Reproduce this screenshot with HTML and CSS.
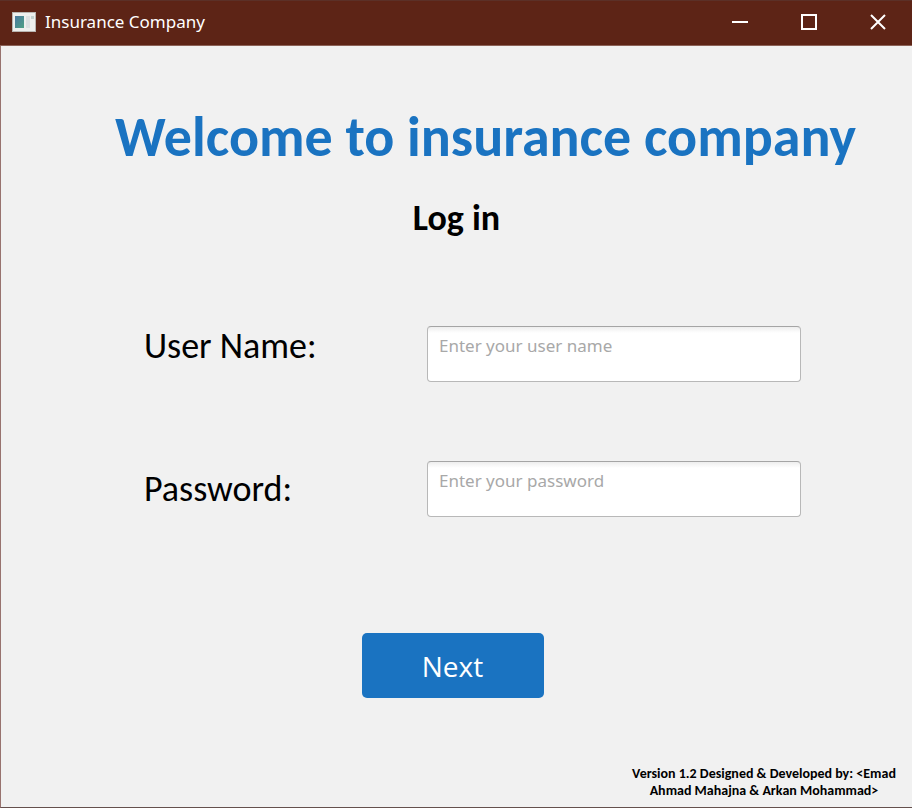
FILE: index.html
```html
<!DOCTYPE html>
<html lang="en">
<head>
<meta charset="utf-8">
<title>Insurance Company</title>
<link rel="stylesheet" href="styles.css">
</head>
<body>
<div class="window">
  <header class="titlebar">
    <svg class="app-icon" width="24" height="20" viewBox="0 0 24 20" aria-hidden="true">
      <defs><linearGradient id="pane" x1="0" y1="0" x2="1" y2="1"><stop offset="0" stop-color="#4a78a0"/><stop offset="1" stop-color="#4fa083"/></linearGradient></defs>
      <rect width="24" height="20" fill="#b9b5b1"/>
      <rect x="1" y="1" width="22" height="18" fill="#eeefed"/>
      <rect x="3" y="4" width="9" height="12" fill="url(#pane)"/>
      <rect x="14" y="4" width="4" height="12" fill="#dde0e1"/>
      <rect x="19" y="4" width="3" height="3" fill="#c3d2cf"/>
    </svg>
    <span class="caption">Insurance Company</span>
    <div class="controls">
      <button type="button" aria-label="Minimize"><svg width="16" height="16" viewBox="0 0 16 16"><path d="M0 8H16"/></svg></button>
      <button type="button" aria-label="Maximize"><svg width="16" height="16" viewBox="0 0 16 16"><rect x="1" y="1" width="14" height="14"/></svg></button>
      <button type="button" aria-label="Close"><svg width="16" height="16" viewBox="0 0 16 16"><path d="M1 1L15 15M15 1L1 15"/></svg></button>
    </div>
  </header>
  <main class="content">
    <h1>Welcome to insurance company</h1>
    <h2>Log in</h2>
    <form class="login">
      <div class="fields">
        <label class="user-label" for="user">User Name:</label>
        <input id="user" type="text" placeholder="Enter your user name">
        <label for="password">Password:</label>
        <input id="password" type="password" placeholder="Enter your password">
      </div>
      <button class="next" type="button">Next</button>
    </form>
    <footer>Version 1.2 Designed &amp; Developed by: &lt;Emad Ahmad Mahajna &amp; Arkan Mohammad&gt;</footer>
  </main>
</div>
</body>
</html>
```
FILE: styles.css
```css
* {
  box-sizing: border-box;
}

body {
  margin: 0;
  color: #000;
  font-family: Carlito, Lato, "Open Sans", sans-serif;
}

.window {
  display: flex;
  flex-direction: column;
  min-height: 100vh;
  background: #f1f1f1;
  border-left: 1px solid #98736f;
  border-bottom: 1px solid #65504d;
}

.titlebar {
  display: flex;
  align-items: center;
  height: 46px;
  padding: 0 0 2px 12px;
  background: #5d2416;
  border-top: 1px solid #5b3027;
  border-bottom: 1px solid #8c6257;
  margin-left: -1px;
}

.caption {
  margin-left: 9px;
  color: #fff;
  font: 17px/24px "Noto Sans", sans-serif;
}

.controls {
  display: flex;
  align-self: stretch;
  margin-left: auto;
}

.controls button {
  display: grid;
  place-items: center;
  width: 69px;
  padding: 0;
  border: 0;
  background: none;
}

.controls svg {
  fill: none;
  stroke: #fff;
  stroke-width: 2;
}

.content {
  display: flex;
  flex: 1;
  flex-direction: column;
}

h1 {
  margin: 59px 0 0;
  padding-left: 58px;
  color: #1a73c1;
  font-size: 56px;
  line-height: 64px;
  text-align: center;
}

h2 {
  margin: 29px 0 0;
  font-size: 36px;
  line-height: 40px;
  text-align: center;
}

.login {
  display: flex;
  flex-direction: column;
  align-items: center;
  margin-top: 88px;
  padding: 0 111px 0 143px;
}

.fields {
  display: grid;
  grid-template-columns: 283px 1fr;
  row-gap: 79px;
  align-items: center;
  width: 100%;
}

label {
  font-size: 36px;
  line-height: 40px;
}

.user-label {
  align-self: start;
}

input {
  width: 100%;
  height: 56px;
  padding: 6px 11px 24px;
  border: 1px solid #b8b8b8;
  border-top-color: #a5a5a5;
  border-radius: 4px;
  background: linear-gradient(#eee, #fff 6px);
  font: 17px/24px "Noto Sans", sans-serif;
}

input::placeholder {
  color: #a8a8a8;
}

.next {
  width: 182px;
  height: 65px;
  margin: 116px 40px 0 0;
  border: 0;
  border-radius: 5px;
  background: #1a73c1;
  color: #fff;
  font: 28px/36px "Open Sans", sans-serif;
}

footer {
  align-self: flex-end;
  max-width: 296px;
  margin-top: auto;
  padding: 0 14px 8px;
  font-size: 14px;
  font-weight: bold;
  line-height: 17px;
  text-align: center;
}
```
